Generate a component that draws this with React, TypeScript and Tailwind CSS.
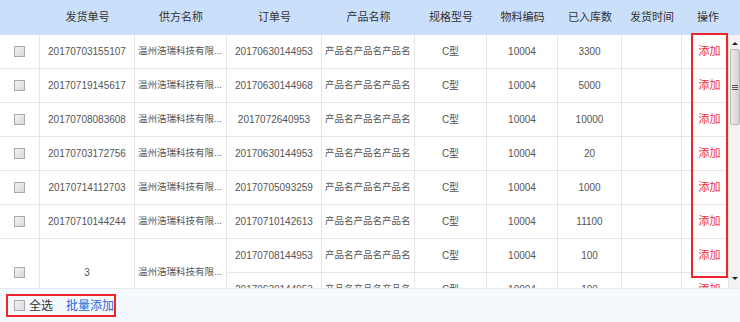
import React from 'react';

// 发货明细表格
interface Row {
  no: string;
  supplier: string;
  order: string;
  product: string;
  spec: string;
  code: string;
  qty: string;
}

const cols = [
  { label: '', w: 'w-[40px]' },
  { label: '发货单号', w: 'w-[95px]' },
  { label: '供方名称', w: 'w-[92px]' },
  { label: '订单号', w: 'w-[95px]' },
  { label: '产品名称', w: 'w-[93px]' },
  { label: '规格型号', w: 'w-[72px]' },
  { label: '物料编码', w: 'w-[71px]' },
  { label: '已入库数', w: 'w-[64px]' },
  { label: '发货时间', w: 'w-[60px]' },
  { label: '操作', w: 'w-[46px]' },
];

const rows: Row[] = [
  { no: '20170703155107', supplier: '温州浩瑞科技有限...', order: '20170630144953', product: '产品名产品名产品名', spec: 'C型', code: '10004', qty: '3300' },
  { no: '20170719145617', supplier: '温州浩瑞科技有限...', order: '20170630144968', product: '产品名产品名产品名', spec: 'C型', code: '10004', qty: '5000' },
  { no: '20170708083608', supplier: '温州浩瑞科技有限...', order: '2017072640953', product: '产品名产品名产品名', spec: 'C型', code: '10004', qty: '10000' },
  { no: '20170703172756', supplier: '温州浩瑞科技有限...', order: '20170630144953', product: '产品名产品名产品名', spec: 'C型', code: '10004', qty: '20' },
  { no: '20170714112703', supplier: '温州浩瑞科技有限...', order: '20170705093259', product: '产品名产品名产品名', spec: 'C型', code: '10004', qty: '1000' },
  { no: '20170710144244', supplier: '温州浩瑞科技有限...', order: '20170710142613', product: '产品名产品名产品名', spec: 'C型', code: '10004', qty: '11100' },
];

const subRows = [
  { order: '20170708144953', product: '产品名产品名产品名', spec: 'C型', code: '10004', qty: '100' },
  { order: '20170630144953', product: '产品名产品名产品名', spec: 'C型', code: '10004', qty: '100' },
];

const cell =
  'flex shrink-0 items-center justify-center overflow-hidden whitespace-nowrap border-r border-b border-[#e6e6e6] px-[3px]';

const Check = () => (
  <span className="block h-[11px] w-[11px] shrink-0 border border-[#a9a9a9] bg-gradient-to-br from-[#f4f4f4] to-[#d9d9d9]" />
);

const AddLink = () => <span className="text-[11px] text-[#ee2b3c]">添加</span>;

const RestCells = ({ r }: { r: Omit<Row, 'no' | 'supplier'> }) => (
  <>
    <div className={`${cell} ${cols[3].w}`}>{r.order}</div>
    <div className={`${cell} ${cols[4].w} justify-start text-[9.5px]`}>{r.product}</div>
    <div className={`${cell} ${cols[5].w}`}>{r.spec}</div>
    <div className={`${cell} ${cols[6].w}`}>{r.code}</div>
    <div className={`${cell} ${cols[7].w}`}>{r.qty}</div>
    <div className={`${cell} ${cols[8].w}`}></div>
    <div className={`${cell} ${cols[9].w} border-r-0 pl-[12px]`}>
      <AddLink />
    </div>
  </>
);

const Scrollbar = () => (
  <div className="flex w-[12px] shrink-0 flex-col items-center border-l border-[#e2e2e2] bg-[#f3f3f3]">
    <div className="flex h-[13px] items-end justify-center">
      <span className="mb-[3px] h-0 w-0 border-x-[3px] border-b-[3px] border-x-transparent border-b-[#222]" />
    </div>
    <div className="mt-[1px] flex h-[76px] w-[10px] items-center justify-center rounded-[2px] border border-[#b9b9b9] bg-gradient-to-r from-[#ececec] to-[#d2d2d2]">
      <div className="flex flex-col gap-[1px]">
        <span className="block h-[1px] w-[6px] bg-[#555]" />
        <span className="block h-[1px] w-[6px] bg-[#555]" />
        <span className="block h-[1px] w-[6px] bg-[#555]" />
      </div>
    </div>
    <div className="flex-1" />
    <div className="flex h-[13px] items-start justify-center">
      <span className="mt-[2px] h-0 w-0 border-x-[3px] border-t-[3px] border-x-transparent border-t-[#222]" />
    </div>
  </div>
);

export default function App() {
  return (
    <div
      className="relative h-[322px] w-[740px] overflow-hidden bg-white text-[10px] text-[#555]"
      style={{ fontFamily: '"Liberation Sans", "Noto Sans CJK SC", sans-serif' }}
    >
      {/* 表头 */}
      <div className="flex h-[35px] bg-[#cadff9] text-[11px] text-[#333]">
        {cols.map((c, i) => (
          <div key={i} className={`flex shrink-0 items-center justify-center ${c.w} ${i === 9 ? 'pl-[6px]' : ''}`}>
            {c.label}
          </div>
        ))}
      </div>

      {/* 表体 */}
      <div className="flex h-[253px]">
        <div className="w-[728px] overflow-hidden">
          {rows.map((r) => (
            <div key={r.no} className="flex h-[34px]">
              <div className={`${cell} ${cols[0].w}`}>
                <Check />
              </div>
              <div className={`${cell} ${cols[1].w}`}>{r.no}</div>
              <div className={`${cell} ${cols[2].w} justify-start text-[9.5px]`}>{r.supplier}</div>
              <RestCells r={r} />
            </div>
          ))}
          <div className="flex h-[68px]">
            <div className={`${cell} ${cols[0].w}`}>
              <Check />
            </div>
            <div className={`${cell} ${cols[1].w}`}>3</div>
            <div className={`${cell} ${cols[2].w} justify-start text-[9.5px]`}>温州浩瑞科技有限...</div>
            <div className="flex flex-col">
              {subRows.map((s, i) => (
                <div key={i} className="flex h-[34px]">
                  <RestCells r={s} />
                </div>
              ))}
            </div>
          </div>
        </div>
        <Scrollbar />
      </div>

      {/* 底部 */}
      <div className="flex h-[34px] items-center border-t border-[#e3ebf1] bg-[#f3f9fd] pl-[6px]">
        <div className="flex h-[23px] w-[110px] shrink-0 items-center whitespace-nowrap border-2 border-[#f0242c] pl-[6px]">
          <Check />
          <span className="ml-[4px] text-[12px] text-[#333]">全选</span>
          <span className="ml-[13px] text-[12px] text-[#2a66d4]">批量添加</span>
        </div>
      </div>

      {/* 标注框 */}
      <div className="pointer-events-none absolute left-[691px] top-[33px] h-[245px] w-[37px] border-2 border-[#f0242c]" />
    </div>
  );
}
